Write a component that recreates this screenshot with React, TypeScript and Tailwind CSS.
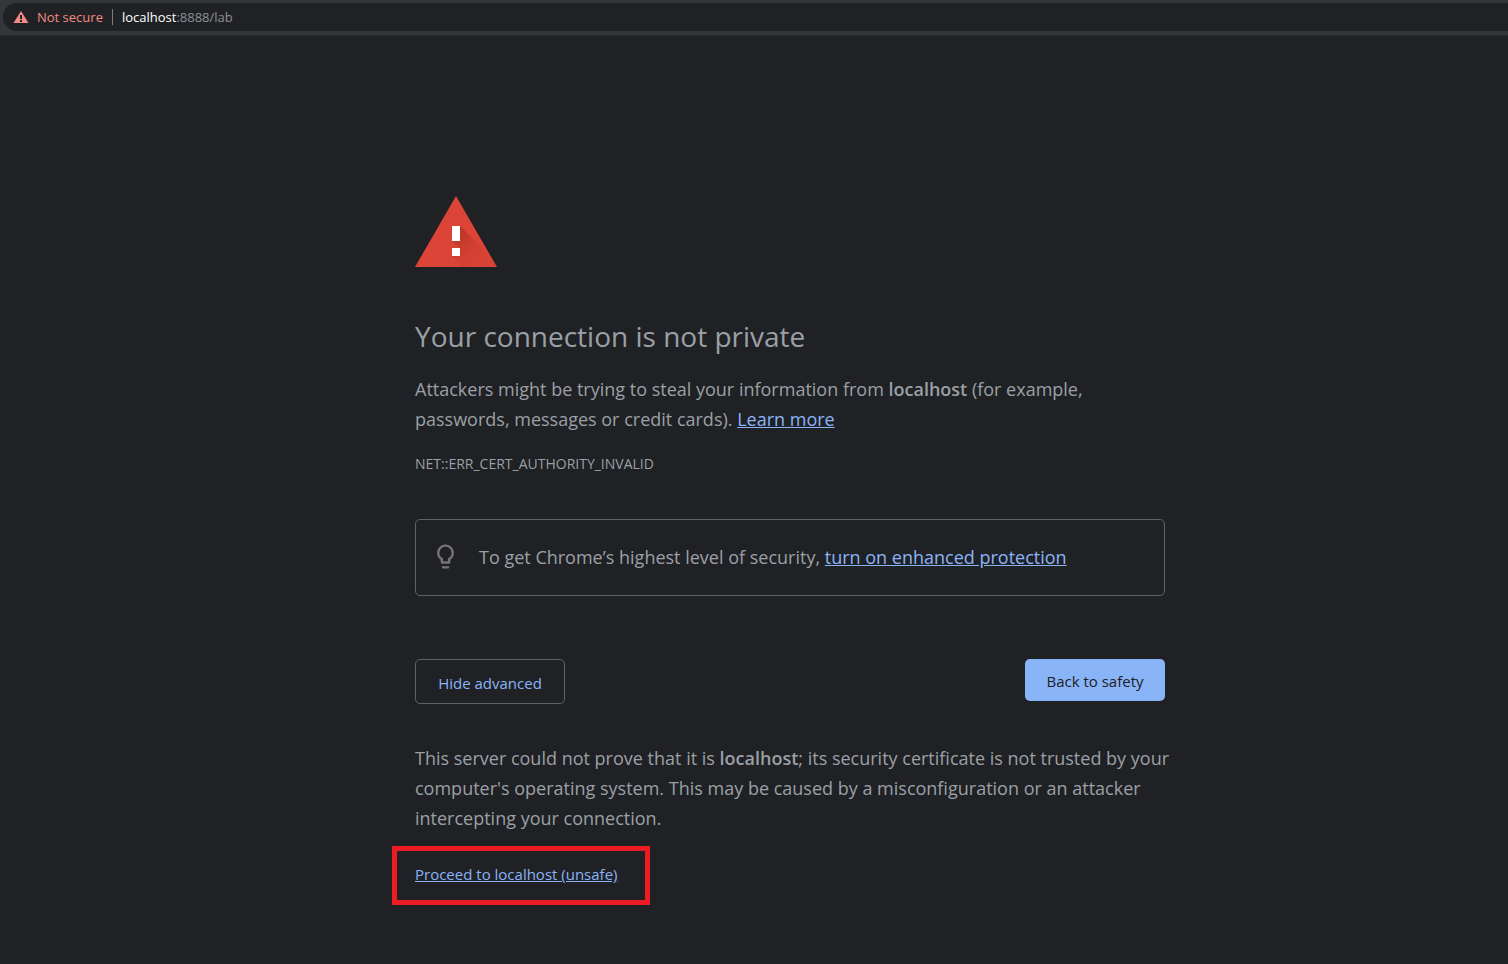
import React from "react";

function WarningTriangle() {
  return (
    <svg viewBox="0 0 82 71" className="h-[71px] w-[82px]" role="img" aria-label="Warning">
      <defs>
        <linearGradient id="shade" x1="41" y1="40" x2="66" y2="65" gradientUnits="userSpaceOnUse">
          <stop offset="0" stopColor="#8a2417" stopOpacity="0.42" />
          <stop offset="0.6" stopColor="#a52714" stopOpacity="0.14" />
          <stop offset="1" stopColor="#a52714" stopOpacity="0.06" />
        </linearGradient>
      </defs>
      <path d="M41 0 82 71H0Z" fill="#db4437" />
      <path d="M45 30 76.500 61.500 82 71H48L37 60H45V53L37 45H45Z" fill="url(#shade)" />
      <path d="M37 30h8v15h-8zM37 52h8v8h-8z" fill="#fff" />
    </svg>
  );
}

function AddressBar() {
  return (
    <header className="border-b border-[#292a2d] bg-[#35363a] pt-[3px] pb-1 pl-[3px]">
      <div className="flex h-7 items-center rounded-l-full bg-[#202124] pl-[10px] text-[13px]">
        <svg viewBox="0 0 16 14" className="h-[14px] w-4" aria-hidden="true">
          <path d="M8 1 15.5 13H0.5Z" fill="#f28b82" />
          <path d="M7 5h2v4H7zM7 10h2v2H7z" fill="#202124" />
        </svg>
        <span className="ml-2 text-[#f28b82]">Not secure</span>
        <span className="mx-[9px] h-4 w-px bg-[#7a7d81]" />
        <span className="text-[#8b8f94]">
          <span className="font-medium text-white">localhost</span>:8888/lab
        </span>
      </div>
    </header>
  );
}

export default function App() {
  return (
    <div className="min-h-screen bg-[#202124] font-['Open_Sans','Noto_Sans',sans-serif] text-[18px] leading-[30px] text-[#9aa0a6]">
      <AddressBar />
      <div className="pl-[72px]">
        <main className="mx-auto max-w-[750px] pt-40 pb-14">
          <WarningTriangle />
          <h1 className="mt-[49px] text-[28px] leading-10">Your connection is not private</h1>
          <p className="mt-[18px]">
            Attackers might be trying to steal your information from{" "}
            <strong className="font-semibold">localhost</strong> (for example, passwords, messages or credit
            cards).{" "}
            <a href="#learn-more" className="text-[#8ab4f8] underline">Learn more</a>
          </p>
          <p className="mt-5 text-[14px] leading-5">NET::ERR_CERT_AUTHORITY_INVALID</p>
          <div className="mt-[45px] flex h-[77px] items-center rounded-[5px] border border-[#5f6368] pb-[2px] pl-[15px]">
            <svg viewBox="0 0 24 24" className="size-[29px]" fill="#757575" aria-hidden="true">
              <path d="M9 21c0 .55.45 1 1 1h4c.55 0 1-.45 1-1v-1H9v1zm3-19C8.140 2 5 5.140 5 9c0 2.380 1.190 4.470 3 5.740V17c0 .55.45 1 1 1h6c.55 0 1-.45 1-1v-2.260c1.810-1.270 3-3.360 3-5.740 0-3.860-3.140-7-7-7zm2.850 11.100l-.85.6V16h-4v-2.300l-.85-.6C7.800 12.160 7 10.630 7 9c0-2.760 2.240-5 5-5s5 2.240 5 5c0 1.630-.8 3.160-2.150 4.100z" />
            </svg>
            <p className="ml-[19px]">
              To get Chrome’s highest level of security,{" "}
              <a href="#enhanced-protection" className="text-[#8ab4f8] underline">turn on enhanced protection</a>
            </p>
          </div>
          <div className="mt-[63px] flex items-start justify-between text-[15px]">
            <button type="button" className="h-[45px] w-[150px] rounded-[5px] border border-[#5f6368] pt-[2px] text-[#8ab4f8]">
              Hide advanced
            </button>
            <button type="button" className="h-[42px] w-[140px] rounded-[5px] bg-[#8ab4f8] pt-[2px] text-[#202124]">
              Back to safety
            </button>
          </div>
          <p className="mt-[39px] -mr-4">
            This server could not prove that it is <strong className="font-semibold">localhost</strong>; its
            security certificate is not trusted by your computer's operating system. This may be caused by a
            misconfiguration or an attacker intercepting your connection.
          </p>
          <div className="mt-[13px] -ml-[23px] flex h-[59px] w-[258px] items-center border-5 border-[#ed1c24] pb-[3px] pl-[18px]">
            <a href="#proceed" className="text-[15px] text-[#8ab4f8] underline">Proceed to localhost (unsafe)</a>
          </div>
        </main>
      </div>
    </div>
  );
}
